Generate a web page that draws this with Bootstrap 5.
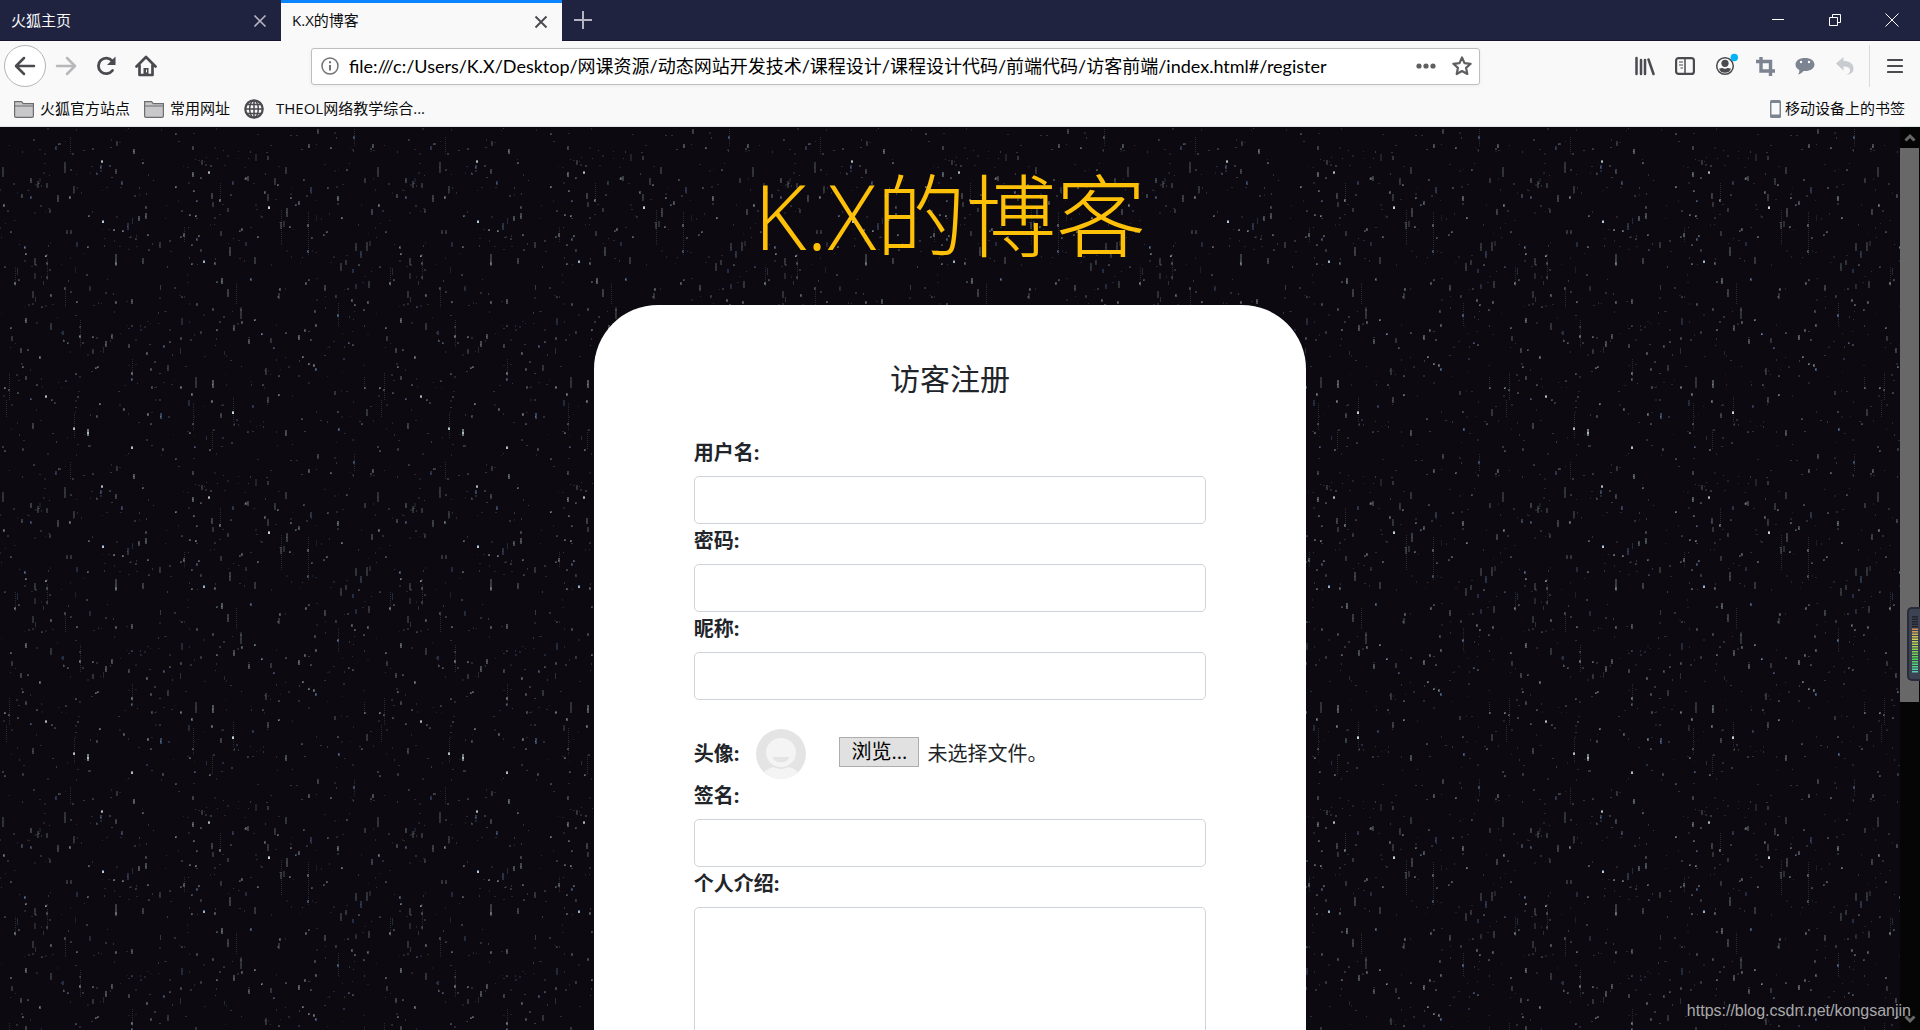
<!DOCTYPE html>
<html lang="zh-CN">
<head>
<meta charset="utf-8">
<meta name="viewport" content="width=device-width, initial-scale=1">
<title>K.X的博客</title>
<link href="https://cdn.jsdelivr.net/npm/bootstrap@5.3.0/dist/css/bootstrap.min.css" rel="stylesheet">
<style>
body{font-family:"Open Sans","Noto Sans CJK SC",sans-serif;color:#212529;background:#0c0a10}
.win-bar{height:41px;background:#202340;border-bottom:1px solid #15152f}
.win-tab{width:281px;padding:0 14px 0 11px;font-size:15px;color:#f9f9fa;line-height:41px;height:41px}
.win-tab.current{background:#f9f9fa;color:#0c0c0d;border-top:3px solid #0a84ff;line-height:35px}
.plain{border:0;background:none;padding:0;display:flex;align-items:center;justify-content:center;flex:none;color:inherit}
.plain svg,.mark-link svg{display:block;flex:none}
.sys-btn{width:57px;height:40px;color:#fff}
.new-tab{width:42px}
.tool-row{height:50px;background:#f9f9fa;color:#4a4a4f}
.tool-btn{width:40px;height:40px}
.menu-btn{width:50px}
.tool-rule{height:42px;border-left:1px solid #dadadc}
.back-btn{width:42px;height:42px;border:1px solid #b5b5b8;border-radius:50%;background:#fff}
.addr{height:37px;border:1px solid #bebebe;border-radius:3px;background:#fff;box-shadow:0 1px 4px rgba(0,0,0,.06);padding:0 7px 0 9px}
.addr input{border:0;outline:0;font-family:Lato,"Noto Sans CJK SC",sans-serif;font-size:18px;line-height:26px;color:#000;background:none;min-width:0;margin-left:10px}
.side-left{width:311px}
.side-right{width:440px}
.mark-row{height:36px;background:#f9f9fa;border-bottom:1px solid #e0e6e3;font-size:15px;padding:0 15px 0 14px}
.mark-link{color:#0c0c0d;text-decoration:none;display:flex;align-items:center;gap:6px}
.mark-link+.mark-link{margin-left:14px}
.view{min-height:0;background:#0c0a10}
.sky{position:absolute;inset:0;width:100%;height:100%}
.blog-title{font-size:90px;font-weight:300;line-height:108px;color:#ffc107;padding:34px 0 36px}
.panel{width:37.5%;border-radius:64px 64px 0 0;background:#fff;padding:56px 100px 100px}
.panel-title{font-size:30px;line-height:36px;font-weight:400;margin-bottom:39px}
.panel label{font-size:20px;line-height:34px;font-weight:700;margin:0 0 6px;display:block}
.panel .form-control{height:48px;border:1px solid #ced4da;border-radius:5px;font-size:20px}
.panel textarea.form-control{height:200px}
.avatar-line{margin-top:28px;height:51px;font-size:20px}
.panel .avatar-line label{margin:0 17px 0 0}
.browse{width:80px;height:30px;border:1px solid #adadad;background:#e1e1e1;color:#000;padding:0;font-size:20px;line-height:26px;margin:0 8px 4px 33px}
.track{width:20px;background:#050506;position:relative}
.track .cap{height:21px;display:flex;align-items:center;justify-content:center}
.thumb{height:554px;background:#686868;margin-right:1px}
.gauge{position:absolute;right:0;top:480px;width:13px;height:74px;background:#3d4252;border:2px solid #292c38;border-right:0;border-radius:5px 0 0 5px;z-index:3}
.gauge svg{display:block}
.watermark{position:absolute;right:9px;bottom:7px;font-family:"Liberation Sans",sans-serif;font-size:16px;line-height:24px;color:#a9a9ab;z-index:4}
</style>
</head>
<body class="vh-100 d-flex flex-column overflow-hidden">
<header class="flex-shrink-0">
  <div class="win-bar d-flex">
    <div class="win-tab d-flex justify-content-between">
      <span>火狐主页</span>
      <button class="plain" aria-label="关闭标签页"><svg width="14" height="41" viewBox="0 0 14 41" stroke="#b4b5c0" stroke-width="1.6"><path d="M1.500 15.500l11 11m0-11l-11 11"/></svg></button>
    </div>
    <div class="win-tab current d-flex justify-content-between">
      <span>K.X的博客</span>
      <button class="plain" aria-label="关闭标签页"><svg width="14" height="35" viewBox="0 0 14 35" stroke="#4a4a4f" stroke-width="1.9"><path d="M1.500 11.500l11 11m0-11l-11 11"/></svg></button>
    </div>
    <button class="plain new-tab me-auto" aria-label="新标签页"><svg width="18" height="18" viewBox="0 0 18 18" stroke="#b4b5c0" stroke-width="2"><path d="M9 0v18M0 9h18"/></svg></button>
    <button class="plain sys-btn" aria-label="最小化"><svg width="12" height="12" viewBox="0 0 12 12" stroke="#fff"><path d="M0 5.500h12"/></svg></button>
    <button class="plain sys-btn" aria-label="还原"><svg width="12" height="12" viewBox="0 0 12 12" fill="none" stroke="#fff"><path d="M.5 3.500h8v8h-8zM3.500 3.500v-3h8v8h-3"/></svg></button>
    <button class="plain sys-btn" aria-label="关闭"><svg width="14" height="14" viewBox="0 0 14 14" stroke="#fff"><path d="M.5.5l13 13m0-13l-13 13"/></svg></button>
  </div>
  <div class="tool-row d-flex align-items-center">
    <div class="side-left d-flex align-items-center flex-shrink-0 ps-1">
      <button class="plain back-btn" aria-label="后退"><svg width="22" height="22" viewBox="0 0 22 22" fill="none" stroke="#4a4a4f" stroke-width="2.500" stroke-linecap="round" stroke-linejoin="round"><path d="M20 11H2.500M10 3l-8 8 8 8"/></svg></button>
      <button class="plain tool-btn" aria-label="前进"><svg width="22" height="22" viewBox="0 0 22 22" fill="none" stroke="#b8b8ba" stroke-width="2.500" stroke-linecap="round" stroke-linejoin="round"><path d="M2 11h17.500M12 3l8 8-8 8"/></svg></button>
      <button class="plain tool-btn" aria-label="刷新"><svg width="22" height="22" viewBox="0 0 22 22" fill="none" stroke="#4a4a4f" stroke-width="2.800" stroke-linecap="round"><path d="M17.500 15.500A7.800 7.800 0 1 1 17.300 6"/><path d="M20.500 1.500v8.500h-8.500z" fill="#4a4a4f" stroke="none"/></svg></button>
      <button class="plain tool-btn" aria-label="主页"><svg width="22" height="22" viewBox="0 0 22 22" fill="none" stroke="#4a4a4f" stroke-width="2.700" stroke-linejoin="round" stroke-linecap="round"><path d="M1.500 11.500L11 2l9.500 9.500M4.500 10v10h13V10"/><path d="M8.500 20v-7h5v7z" fill="#4a4a4f" stroke="none"/><path d="M11.500 15v2" stroke="#f9f9fa" stroke-width="1"/></svg></button>
    </div>
    <div class="addr flex-grow-1 d-flex align-items-center">
      <svg class="flex-shrink-0" width="18" height="18" viewBox="0 0 18 18" fill="none" stroke="#737373" stroke-width="1.500"><circle cx="9" cy="9" r="8"/><path d="M9 8v5.500M9 4.300v2" stroke-width="2"/></svg>
      <input class="flex-grow-1 p-0" type="text" aria-label="地址" value="file:///c:/Users/K.X/Desktop/网课资源/动态网站开发技术/课程设计/课程设计代码/前端代码/访客前端/index.html#/register">
      <button class="plain me-3" aria-label="页面操作"><svg width="20" height="6" viewBox="0 0 20 6" fill="#5f5f62"><circle cx="3" cy="3" r="2.600"/><circle cx="10" cy="3" r="2.600"/><circle cx="17" cy="3" r="2.600"/></svg></button>
      <button class="plain" aria-label="添加书签"><svg width="20" height="20" viewBox="0 0 20 20" fill="none" stroke="#5f5f62" stroke-width="2.200" stroke-linejoin="round"><path d="M10 1.500l2.500 5.600 6.100.7-4.500 4.100 1.200 6.100L10 15l-5.300 3 1.200-6.100L1.400 7.800l6.100-.7z"/></svg></button>
    </div>
    <div class="side-right d-flex align-items-center justify-content-end flex-shrink-0">
      <button class="plain tool-btn" aria-label="书库"><svg width="20" height="20" viewBox="0 0 20 20" stroke="#4a4a4f" stroke-width="2.500" stroke-linecap="round"><path d="M1.500 2v16M6 4v14M10 4v14M13.500 3.500L18.500 18"/></svg></button>
      <button class="plain tool-btn" aria-label="侧栏"><svg width="20" height="18" viewBox="0 0 20 18" fill="none" stroke="#4a4a4f" stroke-width="2.200"><rect x="1.100" y="1.100" width="17.800" height="15.800" rx="2.500"/><path d="M10 1v16" stroke-width="1.500"/><path d="M4 5h4M4 8h4M5.500 11H8" stroke-width="1.200"/></svg></button>
      <button class="plain tool-btn" aria-label="账户"><svg width="26" height="26" viewBox="0 0 26 26"><circle cx="13" cy="13" r="8.300" fill="none" stroke="#4a4a4f" stroke-width="1.500"/><circle cx="13" cy="10.300" r="3.600" fill="#4a4a4f"/><path d="M7 15.500c1.600 0 2.400-.5 3.500-.5 1 1 4 1 5 0 1.200 0 2 .5 3.500.5-1 3.300-3.400 4.300-6 4.300s-5-1-6-4.300z" fill="#4a4a4f"/><circle cx="22.300" cy="4.500" r="3.700" fill="#00b3f4"/></svg></button>
      <button class="plain tool-btn" aria-label="截图"><svg width="19" height="19" viewBox="0 0 19 19" fill="none" stroke="#7b8490" stroke-width="3.400"><path d="M5 0v14h14M0 4.500h14.500V19"/></svg></button>
      <button class="plain tool-btn" aria-label="反馈"><svg width="20" height="19" viewBox="0 0 20 19"><path d="M10 1c5.500 0 9.500 2.700 9.500 6.500S15.500 14 10 14l-1.500-.1C7 15.700 5.300 17 3 17.500c1-1.300 1.500-2.800 1.300-4.600C2 11.700.5 9.900.5 7.500.5 3.700 4.500 1 10 1z" fill="#7b8490"/><circle cx="6" cy="5" r="1.200" fill="#fff"/><circle cx="14" cy="5" r="1.200" fill="#fff"/></svg></button>
      <button class="plain tool-btn" aria-label="撤销"><svg width="18" height="18" viewBox="0 0 18 18"><path d="M7.500 0v4c6 0 10 2.500 10 7.500 0 4-3 6-7.500 6.500 2.500-1 4-2.500 4-4.500 0-3-2.500-4-6.500-4v4L0 6.500z" fill="#c8cbd0"/></svg></button>
      <span class="tool-rule ms-1"></span>
      <button class="plain menu-btn" aria-label="菜单"><svg width="16" height="16" viewBox="0 0 16 16" stroke="#4a4a4f" stroke-width="2.200" stroke-linecap="round"><path d="M1 2h14M1 8h14M1 14h14"/></svg></button>
    </div>
  </div>
  <nav class="mark-row d-flex align-items-center" aria-label="书签">
    <a class="mark-link" href="#"><svg width="20" height="18" viewBox="0 0 20 18" fill="#c8c8ca" stroke="#6d6d70" stroke-width="1.200"><path d="M.6 15V1.600h7l1.600 2h10.200V16q0 1.400-1.400 1.400H2Q.6 17.400.6 16zM.6 6h18.800"/></svg>火狐官方站点</a>
    <a class="mark-link" href="#"><svg width="20" height="18" viewBox="0 0 20 18" fill="#c8c8ca" stroke="#6d6d70" stroke-width="1.200"><path d="M.6 15V1.600h7l1.600 2h10.200V16q0 1.400-1.400 1.400H2Q.6 17.400.6 16zM.6 6h18.800"/></svg>常用网址</a>
    <a class="mark-link gap-2" href="#"><svg width="20" height="20" viewBox="0 0 20 20" fill="none" stroke="#4a4a4f" stroke-width="1.500"><circle cx="10" cy="10" r="8.700" stroke-width="2.200"/><ellipse cx="10" cy="10" rx="4.300" ry="8.500"/><path d="M10 1v18M1 10h18M3 5.500h14M3 14.500h14"/></svg><span class="ps-1">THEOL网络教学综合...</span></a>
    <a class="mark-link ms-auto gap-1" href="#"><svg width="11" height="18" viewBox="0 0 11 18"><rect width="11" height="18" rx="1.500" fill="#7b8490"/><rect x="1.500" y="3" width="8" height="11.500" fill="#f9f9fa"/></svg>移动设备上的书签</a>
  </nav>
</header>
<div class="view flex-grow-1 d-flex position-relative">
  <main class="flex-grow-1 position-relative overflow-hidden">
    <svg class="sky" aria-hidden="true"><defs><pattern id="tile" width="375" height="325" patternUnits="userSpaceOnUse"></pattern></defs><rect width="100%" height="100%" fill="url(#tile)"/></svg>
    <div class="position-relative d-flex flex-column align-items-center">
      <h1 class="blog-title m-0">K.X的博客</h1>
      <form class="panel">
        <h2 class="panel-title text-center">访客注册</h2>
        <label for="user">用户名:</label><input id="user" type="text" class="form-control">
        <label for="pass">密码:</label><input id="pass" type="password" class="form-control">
        <label for="nick">昵称:</label><input id="nick" type="text" class="form-control">
        <div class="avatar-line d-flex align-items-center">
          <label for="pic">头像:</label>
          <svg class="flex-shrink-0" width="50" height="50" viewBox="0 0 50 50"><defs><clipPath id="disc"><circle cx="25" cy="25" r="25"/></clipPath></defs><g clip-path="url(#disc)"><rect width="50" height="50" fill="#e4e4e4"/><path d="M7 44c4-4 8-6 12-6h12c4 0 8 2 12 6v8H7z" fill="#f4f4f4"/><path d="M10 24a15 16 0 0 0 30 0" fill="#e4e4e4"/><ellipse cx="25" cy="23.500" rx="15" ry="14.500" fill="#f4f4f4"/><path d="M16.500 28h17c-2 7-15 7-17 0z" fill="#e4e4e4"/></g></svg>
          <button type="button" class="browse" onclick="document.getElementById('pic').click()">浏览...</button><span>未选择文件。</span>
          <input id="pic" type="file" class="d-none">
        </div>
        <label for="sign">签名:</label><input id="sign" type="text" class="form-control">
        <label for="about">个人介绍:</label><textarea id="about" class="form-control"></textarea>
      </form>
    </div>
  </main>
  <div class="track flex-shrink-0">
    <div class="cap"><svg width="12" height="9" viewBox="0 0 12 9" fill="none" stroke="#686868" stroke-width="3"><path d="M1.500 7.500L6 3l4.500 4.500"/></svg></div>
    <div class="thumb"></div>
    <div class="cap position-absolute bottom-0 w-100"><svg width="12" height="9" viewBox="0 0 12 9" fill="none" stroke="#686868" stroke-width="3"><path d="M1.500 1.500L6 6l4.500-4.500"/></svg></div>
  </div>
  <div class="gauge"><svg width="11" height="70" viewBox="0 0 11 70" id="bars"></svg></div>
  <span class="watermark">https://blog.csdn.net/kongsanjin</span>
</div>
<script src="https://cdn.jsdelivr.net/npm/bootstrap@5.3.0/dist/js/bootstrap.bundle.min.js"></script>
<script>
// Star tile: x, y, streak length and brightness (0-9), drawn at three units to the pixel.
const stars = `305,122,6,8 626,156,8,8 403,94,16,6 308,307,12,9 138,409,8,7 78,602,18,6 138,828,8,8 223,928,12,8 264,940,26,8 611,426,10,8 806,262,10,9 928,78,14,5 953,36,18,4 858,154,26,3 1015,236,16,6 1063,52,10,5 1119,78,14,5 994,86,8,5 527,42,8,4 579,84,14,4 350,72,18,3 167,86,14,4 177,72,8,4 102,59,6,3 280,88,6,3 430,129,8,5 348,156,16,4 302,142,14,5 195,146,40,3 10,160,36,3 93,182,18,4 115,195,26,3 142,198,16,3 92,232,10,5 66,230,14,4 13,259,12,6 175,236,24,4 209,232,10,6 222,210,26,3 367,190,14,5 527,201,8,6 580,166,18,6 602,175,8,4 583,213,6,5 605,130,18,3 698,190,14,4 737,175,10,5 745,178,18,4 824,186,26,3 834,195,8,5 913,182,8,4 933,211,20,4 985,204,8,4 795,220,12,5 805,236,26,3 896,250,14,5 873,236,8,5 888,255,6,5 1041,150,8,4 1095,182,18,3 659,243,12,6 635,230,20,4 693,226,8,3 592,244,8,5 638,254,16,3 545,275,8,3 437,262,10,4 437,290,20,5 416,298,18,5 385,322,24,4 267,290,8,5 341,332,8,5 370,334,8,6 588,289,6,6 570,285,6,5 646,296,8,3 662,342,16,3 684,272,14,3 725,328,10,5 720,332,6,4 598,349,8,5 592,358,10,5 552,345,14,5 544,352,8,4 444,345,8,5 480,376,20,3 407,357,8,3 75,385,12,6 77,404,8,6 32,337,6,4 150,275,14,3 202,338,14,3 213,336,14,3 231,374,16,3 265,382,6,5 104,428,26,3 348,422,42,4 347,432,10,5 429,424,20,4 448,392,8,4 576,376,6,4 602,392,10,3 577,434,8,5 645,430,10,5 689,396,30,4 738,374,14,3 773,351,6,5 842,318,26,3 860,280,30,4 870,322,8,5 925,317,10,5 925,396,12,5 936,356,8,4 980,338,8,5 972,346,8,4 1025,296,8,6 1115,278,20,4 1083,405,26,4 1100,382,30,3 1067,384,28,3 1024,444,28,3 1037,428,16,3 1077,436,8,4 14,443,8,4 44,492,10,6 57,480,8,4 141,430,10,4 141,472,10,3 196,505,10,4 271,506,18,3 152,527,10,5 212,518,8,3 232,547,8,5 348,547,10,5 395,545,18,5 545,533,8,4 590,553,10,4 638,568,10,4 651,486,8,4 665,485,20,6 685,520,28,4 753,479,10,6 839,510,10,5 838,530,20,3 919,492,10,5 928,480,8,4 975,504,20,4 1068,502,18,3 1106,494,24,3 1057,544,12,5 1065,555,8,5 1105,547,10,5 1091,572,8,4 1015,587,10,6 1008,530,10,3 944,576,10,4 948,618,10,5 916,632,10,5 857,640,8,4 785,643,8,7 766,601,8,6 727,608,10,5 722,586,36,3 701,624,20,5 651,632,8,5 545,605,24,3 395,619,6,3 336,651,16,5 280,652,8,5 239,651,10,6 152,620,24,3 126,562,8,4 32,626,8,5 36,658,18,3 63,692,16,4 85,690,8,4 119,714,12,6 204,670,8,5 193,664,6,4 280,694,16,3 318,674,20,5 386,680,14,4 440,701,10,5 493,680,10,5 510,666,8,4 542,656,10,4 602,640,12,3 747,665,18,5 812,662,16,3 823,686,8,5 898,654,18,6 933,662,8,4 910,711,8,6 928,734,8,6 943,738,12,6 947,748,10,6 799,755,24,3 838,770,8,4 790,795,8,4 838,826,8,6 804,843,22,4 758,860,10,4 700,877,10,9 662,888,16,4 638,795,28,6 635,845,10,6 576,824,10,6 567,850,20,3 588,790,40,3 543,803,12,5 505,745,20,3 453,750,10,4 457,802,10,4 397,780,12,5 395,760,10,6 299,852,8,6 288,744,8,5 295,740,6,5 227,764,8,4 198,785,8,4 78,775,14,4 69,741,8,5 14,803,6,6 28,812,8,4 53,820,8,4 92,838,8,5 110,797,8,4 157,842,8,4 166,850,6,3 371,868,10,5 445,885,10,6 482,890,20,6 454,912,8,4 292,890,10,4 100,920,20,4 397,983,10,8 488,990,10,4 584,982,8,5 578,912,8,4 570,940,8,5 630,990,8,5 857,940,22,5 744,937,6,3 1018,930,10,6 906,898,8,4 1086,911,6,4 1015,877,6,4 1095,805,8,5 1060,675,8,4 1048,670,6,5 70,988,10,3 15,993,6,4 267,978,8,3`;
const tile = document.getElementById('tile'), parts = [];
const dot = (x, y, w, h, c, o) => parts.push(`<rect x="${x}" y="${y}" width="${w}" height="${h}" fill="${c}" opacity="${o}"/>`);
let seed = 97;
const rnd = () => (seed = seed * 16807 % 2147483647) / 2147483647;
for (let i = 0; i < 420; i++) {
  const streak = rnd() < .06;
  dot(Math.floor(rnd() * 374), Math.floor(rnd() * 322), rnd() < .5 ? 2 : 1, streak ? 4 + Math.floor(rnd() * 4) : 1 + Math.floor(rnd() * 2), rnd() < .2 ? '#5b83c0' : '#8aa0a4', (.12 + rnd() * .2).toFixed(2));
}
for (const [x0, y0, n] of [[209,50,9],[1063,28,9],[44,440,10],[141,418,11],[196,510,9],[239,600,14],[28,758,14],[17,840,9],[395,716,9],[580,850,14],[223,880,13],[700,830,13],[842,270,18],[925,275,22],[1015,550,12],[659,190,9],[553,320,8],[708,490,11],[635,930,10],[1093,770,6]])
  for (let i = 0; i < n; i++) dot(Math.round(x0 / 3), Math.round((y0 - 21) / 3) + i * 2, 1, 1, '#8aa4a8', .22);
stars.split(' ').forEach((s, i) => {
  const [x, y, h, b] = s.split(',').map(Number), len = Math.max(2, Math.round(h / 3.5));
  const px = Math.round(x / 3) - 1, py = Math.round((y - 21 - h / 2) / 3), c = i % 6 == 3 ? '#6b93cc' : '#a9bcc0';
  dot(px, py, 2, len, c, (b * b * .007 + .16).toFixed(2));
  dot(px, py + (len >> 1), b > 7 ? 2 : 1, b > 7 ? 2 : 1, '#dde8ea', (b * b * .009).toFixed(2));
});
tile.innerHTML = parts.join('');
// Level meter: unlit bars at the top, then orange through yellow to green.
let bars = '';
for (let i = 0; i < 23; i++) {
  const k = i - 5, c = k < 0 ? '#22252f' : `hsl(${Math.round(28 + k * 8)} 60% 58%)`;
  bars += `<rect x="3" y="${7 + i * 2.5}" width="6" height="1.500" fill="${c}"/>`;
}
document.getElementById('bars').innerHTML = bars;
</script>
</body>
</html>
